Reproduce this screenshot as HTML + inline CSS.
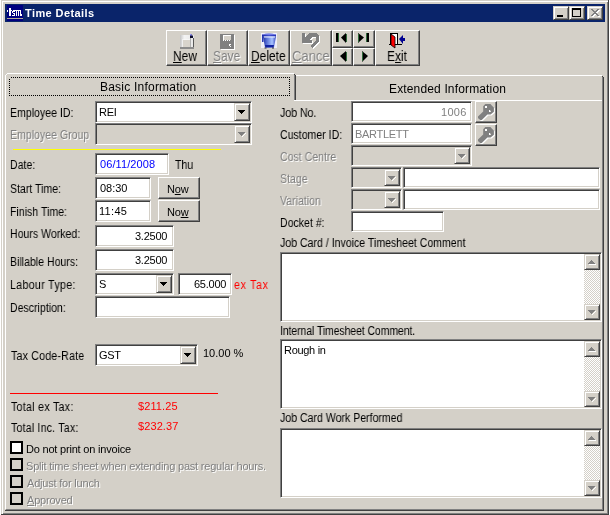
<!DOCTYPE html><html><head><meta charset="utf-8"><style>
html,body{margin:0;padding:0;width:610px;height:515px;overflow:hidden;background:#fff;position:relative}
body>*{position:absolute}
div.r{box-sizing:border-box;border-top:1px solid #fff;border-left:1px solid #fff;border-right:1px solid #404040;border-bottom:1px solid #404040;box-shadow:inset -1px -1px #808080}
div.rb{box-sizing:border-box;border-top:1px solid #d4d0c8;border-left:1px solid #d4d0c8;border-right:1px solid #404040;border-bottom:1px solid #404040;box-shadow:inset 1px 1px #fff, inset -1px -1px #808080}
div.s{box-sizing:border-box;border-top:1px solid #808080;border-left:1px solid #808080;border-right:1px solid #fff;border-bottom:1px solid #fff;box-shadow:inset 1px 1px #404040, inset -1px -1px #d4d0c8}
div.t{font-family:"Liberation Sans",sans-serif;white-space:nowrap;will-change:transform}
div.chk{background:repeating-conic-gradient(#fff 0 25%,#d4d0c8 0 50%) 0 0/2px 2px}
u{text-decoration:underline;text-decoration-thickness:1px;text-underline-offset:1px}
</style></head><body>
<div style="left:1px;top:0;width:608px;height:515px;background:#d4d0c8;border-right:1px solid #404040;border-bottom:1px solid #404040;box-sizing:border-box;box-shadow:inset 1px 1px #d4d0c8, inset 2px 2px #fff, inset -1px -1px #808080"></div>
<div style="left:5px;top:4px;width:600px;height:18px;background:#0a246a"></div>
<div style="left:7px;top:5px;width:16px;height:16px;background:#000080"></div>
<svg style="left:0;top:0" width="30" height="22" shape-rendering="crispEdges"><rect x="7" y="10" width="1" height="2" fill="#fff"/><rect x="9" y="8" width="2" height="8" fill="#fff"/><rect x="11" y="10" width="1" height="1" fill="#fff"/><rect x="12" y="11" width="3" height="1" fill="#fff"/><rect x="12" y="12" width="1" height="1" fill="#fff"/><rect x="13" y="13" width="2" height="1" fill="#fff"/><rect x="14" y="14" width="1" height="1" fill="#fff"/><rect x="12" y="15" width="3" height="1" fill="#fff"/><rect x="13" y="10" width="2" height="1" fill="#fff"/><rect x="16" y="10" width="1" height="6" fill="#fff"/><rect x="17" y="10" width="2" height="1" fill="#fff"/><rect x="18" y="11" width="1" height="5" fill="#fff"/><rect x="19" y="10" width="2" height="1" fill="#fff"/><rect x="20" y="11" width="1" height="5" fill="#fff"/><rect x="15" y="10" width="1" height="1" fill="#fff"/><rect x="21" y="14" width="1" height="2" fill="#fff"/></svg>
<div style="left:7px;top:18px;width:16px;height:1px;background:#b0a898"></div>
<div class="t" style="left:25px;top:8px;font-size:11px;line-height:11px;letter-spacing:0.4px;font-weight:bold;color:#fff">Time Details</div>
<div class="rb" style="left:553px;top:6px;width:16px;height:14px;background:#d4d0c8"></div>
<div class="rb" style="left:569px;top:6px;width:16px;height:14px;background:#d4d0c8"></div>
<div class="rb" style="left:587px;top:6px;width:16px;height:14px;background:#d4d0c8"></div>
<div style="left:557px;top:15px;width:6px;height:2px;background:#000"></div>
<div style="left:572px;top:8px;width:9px;height:9px;box-sizing:border-box;border:1px solid #000;border-top-width:2px"></div>
<svg style="left:591px;top:9px" width="10" height="9" shape-rendering="crispEdges"><path d="M1 1h2v1h1v1h2v-1h1v-1h2v1h-1v1h-1v1h-1v1h1v1h1v1h1v1h-2v-1h-1v-1h-2v1h-1v1h-2v-1h1v-1h1v-1h1v-1h-1v-1h-1v-1h-1z" fill="#fff"/><path d="M0 0h2v1h1v1h2v-1h1v-1h2v1h-1v1h-1v1h-1v1h1v1h1v1h1v1h-2v-1h-1v-1h-2v1h-1v1h-2v-1h1v-1h1v-1h1v-1h-1v-1h-1v-1h-1z" fill="#808080"/></svg>
<div class="r" style="left:166px;top:30px;width:41px;height:36px;background:#d4d0c8"></div>
<div class="r" style="left:207px;top:30px;width:41px;height:36px;background:#d4d0c8"></div>
<div class="r" style="left:248px;top:30px;width:42px;height:36px;background:#d4d0c8"></div>
<div class="r" style="left:290px;top:30px;width:42px;height:36px;background:#d4d0c8"></div>
<div class="r" style="left:332px;top:30px;width:21px;height:18px;background:#d4d0c8"></div>
<div class="r" style="left:353px;top:30px;width:22px;height:18px;background:#d4d0c8"></div>
<div class="r" style="left:332px;top:48px;width:21px;height:18px;background:#d4d0c8"></div>
<div class="r" style="left:353px;top:48px;width:22px;height:18px;background:#d4d0c8"></div>
<div class="r" style="left:375px;top:30px;width:45px;height:36px;background:#d4d0c8"></div>
<div class="t" style="left:173px;top:48px;font-size:15px;line-height:15px;transform:scaleX(0.8);transform-origin:0 0;color:#000"><u>N</u>ew</div>
<div class="t" style="left:214px;top:49px;font-size:15px;line-height:15px;transform:scaleX(0.8);transform-origin:0 0;color:#fff"><u>S</u>ave</div>
<div class="t" style="left:213px;top:48px;font-size:15px;line-height:15px;transform:scaleX(0.8);transform-origin:0 0;color:#808080"><u>S</u>ave</div>
<div class="t" style="left:251px;top:48px;font-size:15px;line-height:15px;transform:scaleX(0.8);transform-origin:0 0;color:#000"><u>D</u>elete</div>
<div style="left:292px;top:32px;width:38px;height:32px;overflow:hidden"><div class="t" style="position:absolute;left:1px;top:17px;font-size:15px;line-height:15px;transform:scaleX(0.87);transform-origin:0 0;color:#fff"><u>C</u>ancel</div><div class="t" style="position:absolute;left:0px;top:16px;font-size:15px;line-height:15px;transform:scaleX(0.87);transform-origin:0 0;color:#808080"><u>C</u>ancel</div></div>
<div class="t" style="left:387px;top:48px;font-size:15px;line-height:15px;transform:scaleX(0.8);transform-origin:0 0;color:#000">E<u>x</u>it</div>
<svg style="left:176px;top:32px" width="20" height="18"><defs><linearGradient id="ng" x1="0" x2="1"><stop offset="0" stop-color="#c4c4c4"/><stop offset="0.3" stop-color="#f4f4f4"/><stop offset="1" stop-color="#e8e8e8"/></linearGradient></defs><rect x="4" y="3" width="14" height="14" fill="url(#ng)"/><rect x="6.5" y="7.5" width="8" height="8" fill="none" stroke="#fff" stroke-width="1" stroke-dasharray="1 1"/><rect x="7" y="8" width="7" height="7" fill="#d8d4cc"/><rect x="17" y="6" width="1" height="11" fill="#585858"/><rect x="14" y="6" width="1" height="11" fill="#b0b0b0"/><rect x="4" y="15" width="14" height="2" fill="#8c8c8c"/><path d="M14 2h1l2 2v2h-3z" fill="#101030"/><path d="M14 2h1l1.5 1.5-2.5 0z" fill="#9090ff"/></svg>
<svg style="left:220px;top:34px" width="16" height="16" shape-rendering="crispEdges"><rect x="1" y="1" width="14" height="15" fill="#fff"/><rect x="0" y="0" width="14" height="15" fill="#808080"/><rect x="3" y="1" width="8" height="1" fill="#fff"/><rect x="3" y="1" width="1" height="5" fill="#fff"/><rect x="4" y="2" width="7" height="4" fill="#d4d0c8"/><path d="M3 6h1v1h-1zM5 6h1v1h-1zM7 6h1v1h-1zM9 6h1v1h-1z" fill="#fff"/><path d="M9 10h2v1h-1v1h1v1h-1v-1h-1z" fill="#fff"/></svg>
<svg style="left:261px;top:33px" width="16" height="16"><defs><linearGradient id="bg1" x1="0" x2="1"><stop offset="0" stop-color="#2030a0"/><stop offset="0.25" stop-color="#5068d0"/><stop offset="0.7" stop-color="#a8c4ff"/><stop offset="1" stop-color="#3848c0"/></linearGradient><linearGradient id="bg2" x1="0" x2="1"><stop offset="0" stop-color="#1828a0"/><stop offset="0.5" stop-color="#4050d0"/><stop offset="1" stop-color="#2030b0"/></linearGradient></defs><rect x="0" y="0" width="16" height="15" fill="#eeeef8"/><path d="M2 3.5h13l-2 11h-9z" fill="url(#bg1)"/><path d="M1 1.5Q8 -0.5 15 1.5V3.5H1z" fill="url(#bg2)"/><rect x="1.5" y="1" width="13" height="0.8" fill="#a0a0ff" opacity="0.7"/><rect x="3" y="3.5" width="11" height="1" fill="#f0f4ff"/><path d="M4 12h9l-0.5 2.5h-8z" fill="#1020a0"/><rect x="1" y="3" width="1.5" height="6" fill="#2838b0"/><path d="M3.5 14.5h2v1h-2zM11 14.5h2v1h-2z" fill="#303040"/></svg>
<svg style="left:302px;top:33px" width="20" height="18" shape-rendering="crispEdges"><path transform="translate(1,1)" d="M0 0h3v4l4-4h7l3 3v5l-7 7-2-2 6-6v-2l-1-1h-3l-3 3h3v3h-10z" fill="#fff"/><path d="M0 0h3v4l4-4h7l3 3v5l-7 7-2-2 6-6v-2l-1-1h-3l-3 3h3v3h-10z" fill="#808080"/></svg>
<svg style="left:388px;top:33px" width="20" height="17"><rect x="2" y="0" width="8" height="12" fill="#000"/><rect x="3" y="1" width="6" height="10" fill="#fff"/><rect x="1" y="11" width="13" height="1" fill="#000"/><path d="M3 1l4 3v11l-4-3z" fill="#ff0000" stroke="#000" stroke-width="0.8"/><path d="M11 6l4-4v3h2v3h-2v3z" fill="#000090"/></svg>
<svg style="left:336px;top:33px" width="11" height="10" shape-rendering="crispEdges"><rect x="0" y="0" width="2" height="9" fill="#000"/><rect x="2" y="0" width="1" height="9" fill="#2f6a3a"/><path d="M5 4.5l5-4.5v10z" fill="#000" shape-rendering="auto"/><rect x="10" y="1" width="1" height="8" fill="#2f6a3a"/></svg>
<svg style="left:358px;top:33px" width="11" height="10" shape-rendering="crispEdges"><path d="M0 0l6 4.5-6 5.5z" fill="#000" shape-rendering="auto"/><rect x="0" y="1" width="1" height="8" fill="#2f6a3a"/><rect x="9" y="0" width="2" height="9" fill="#000"/><rect x="8" y="0" width="1" height="9" fill="#2f6a3a"/></svg>
<svg style="left:340px;top:51px" width="7" height="11" shape-rendering="crispEdges"><path d="M0 5l6-5v11z" fill="#000" shape-rendering="auto"/><rect x="6" y="1" width="1" height="9" fill="#2f6a3a"/></svg>
<svg style="left:362px;top:51px" width="7" height="11" shape-rendering="crispEdges"><path d="M6 5l-6-5v11z" fill="#000" shape-rendering="auto"/><rect x="0" y="1" width="1" height="9" fill="#2f6a3a"/></svg>
<svg style="left:0;top:0" width="610" height="515" shape-rendering="crispEdges"><rect x="296" y="75" width="306" height="1" fill="#fff"/><rect x="602" y="76" width="1" height="1" fill="#404040"/><rect x="296" y="100" width="306" height="1" fill="#fff"/><rect x="5" y="75" width="1" height="434" fill="#fff"/><rect x="602" y="77" width="1" height="433" fill="#808080"/><rect x="603" y="77" width="1" height="434" fill="#404040"/><rect x="6" y="509" width="597" height="1" fill="#808080"/><rect x="5" y="510" width="599" height="1" fill="#404040"/><rect x="6" y="74" width="1" height="1" fill="#fff"/><rect x="7" y="73" width="287" height="1" fill="#fff"/><rect x="294" y="74" width="1" height="1" fill="#404040"/><rect x="294" y="75" width="1" height="25" fill="#808080"/><rect x="295" y="75" width="1" height="25" fill="#404040"/><rect x="294" y="100" width="2" height="1" fill="#fff"/><path d="M10 77h1M10 95h1M12 77h1M12 95h1M14 77h1M14 95h1M16 77h1M16 95h1M18 77h1M18 95h1M20 77h1M20 95h1M22 77h1M22 95h1M24 77h1M24 95h1M26 77h1M26 95h1M28 77h1M28 95h1M30 77h1M30 95h1M32 77h1M32 95h1M34 77h1M34 95h1M36 77h1M36 95h1M38 77h1M38 95h1M40 77h1M40 95h1M42 77h1M42 95h1M44 77h1M44 95h1M46 77h1M46 95h1M48 77h1M48 95h1M50 77h1M50 95h1M52 77h1M52 95h1M54 77h1M54 95h1M56 77h1M56 95h1M58 77h1M58 95h1M60 77h1M60 95h1M62 77h1M62 95h1M64 77h1M64 95h1M66 77h1M66 95h1M68 77h1M68 95h1M70 77h1M70 95h1M72 77h1M72 95h1M74 77h1M74 95h1M76 77h1M76 95h1M78 77h1M78 95h1M80 77h1M80 95h1M82 77h1M82 95h1M84 77h1M84 95h1M86 77h1M86 95h1M88 77h1M88 95h1M90 77h1M90 95h1M92 77h1M92 95h1M94 77h1M94 95h1M96 77h1M96 95h1M98 77h1M98 95h1M100 77h1M100 95h1M102 77h1M102 95h1M104 77h1M104 95h1M106 77h1M106 95h1M108 77h1M108 95h1M110 77h1M110 95h1M112 77h1M112 95h1M114 77h1M114 95h1M116 77h1M116 95h1M118 77h1M118 95h1M120 77h1M120 95h1M122 77h1M122 95h1M124 77h1M124 95h1M126 77h1M126 95h1M128 77h1M128 95h1M130 77h1M130 95h1M132 77h1M132 95h1M134 77h1M134 95h1M136 77h1M136 95h1M138 77h1M138 95h1M140 77h1M140 95h1M142 77h1M142 95h1M144 77h1M144 95h1M146 77h1M146 95h1M148 77h1M148 95h1M150 77h1M150 95h1M152 77h1M152 95h1M154 77h1M154 95h1M156 77h1M156 95h1M158 77h1M158 95h1M160 77h1M160 95h1M162 77h1M162 95h1M164 77h1M164 95h1M166 77h1M166 95h1M168 77h1M168 95h1M170 77h1M170 95h1M172 77h1M172 95h1M174 77h1M174 95h1M176 77h1M176 95h1M178 77h1M178 95h1M180 77h1M180 95h1M182 77h1M182 95h1M184 77h1M184 95h1M186 77h1M186 95h1M188 77h1M188 95h1M190 77h1M190 95h1M192 77h1M192 95h1M194 77h1M194 95h1M196 77h1M196 95h1M198 77h1M198 95h1M200 77h1M200 95h1M202 77h1M202 95h1M204 77h1M204 95h1M206 77h1M206 95h1M208 77h1M208 95h1M210 77h1M210 95h1M212 77h1M212 95h1M214 77h1M214 95h1M216 77h1M216 95h1M218 77h1M218 95h1M220 77h1M220 95h1M222 77h1M222 95h1M224 77h1M224 95h1M226 77h1M226 95h1M228 77h1M228 95h1M230 77h1M230 95h1M232 77h1M232 95h1M234 77h1M234 95h1M236 77h1M236 95h1M238 77h1M238 95h1M240 77h1M240 95h1M242 77h1M242 95h1M244 77h1M244 95h1M246 77h1M246 95h1M248 77h1M248 95h1M250 77h1M250 95h1M252 77h1M252 95h1M254 77h1M254 95h1M256 77h1M256 95h1M258 77h1M258 95h1M260 77h1M260 95h1M262 77h1M262 95h1M264 77h1M264 95h1M266 77h1M266 95h1M268 77h1M268 95h1M270 77h1M270 95h1M272 77h1M272 95h1M274 77h1M274 95h1M276 77h1M276 95h1M278 77h1M278 95h1M280 77h1M280 95h1M282 77h1M282 95h1M284 77h1M284 95h1M286 77h1M286 95h1M288 77h1M288 95h1M9 78v1M289 78v1M9 80v1M289 80v1M9 82v1M289 82v1M9 84v1M289 84v1M9 86v1M289 86v1M9 88v1M289 88v1M9 90v1M289 90v1M9 92v1M289 92v1M9 94v1M289 94v1" stroke="#000" stroke-width="1" transform="translate(0.5,0.5)" fill="none"/></svg>
<div class="t" style="left:100px;top:81px;font-size:12px;line-height:12px;letter-spacing:0.22px;color:#000">Basic Information</div>
<div class="t" style="left:389px;top:83px;font-size:12px;line-height:12px;letter-spacing:0.15px;color:#000">Extended Information</div>
<div class="t" style="left:10px;top:107px;font-size:12px;line-height:12px;transform:scaleX(0.88);transform-origin:0 0;color:#000">Employee ID:</div>
<div class="s" style="left:95px;top:101px;width:157px;height:22px;background:#fff"></div>
<div class="rb" style="left:234px;top:103px;width:16px;height:18px;background:#d4d0c8"></div>
<svg style="left:238px;top:110px" width="7" height="4" shape-rendering="crispEdges"><path d="M0 0h7v1h-1v1h-1v1h-1v1h-1v-1h-1v-1h-1v-1h-1z" fill="#000"/></svg>
<div class="t" style="left:99px;top:107px;font-size:11px;line-height:11px;letter-spacing:-0.3px;color:#000">REI</div>
<div class="t" style="left:11px;top:130px;font-size:12px;line-height:12px;transform:scaleX(0.88);transform-origin:0 0;color:#fff">Employee Group</div>
<div class="t" style="left:10px;top:129px;font-size:12px;line-height:12px;transform:scaleX(0.88);transform-origin:0 0;color:#808080">Employee Group</div>
<div class="s" style="left:95px;top:123px;width:157px;height:22px;background:#d4d0c8"></div>
<div class="rb" style="left:234px;top:125px;width:16px;height:18px;background:#d4d0c8"></div>
<svg style="left:238px;top:132px" width="8" height="5" shape-rendering="crispEdges"><path d="M4 4h1v-1h1v-1h1v-1h1v1h-1v1h-1v1h-1v1h-1z" fill="#fff"/><path d="M0 0h7v1h-1v1h-1v1h-1v1h-1v-1h-1v-1h-1v-1h-1z" fill="#808080"/></svg>
<div style="left:13px;top:149px;width:208px;height:1px;background:#ffff00"></div>
<div class="t" style="left:10px;top:159px;font-size:12px;line-height:12px;transform:scaleX(0.88);transform-origin:0 0;color:#000">Date:</div>
<div class="s" style="left:95px;top:153px;width:74px;height:22px;background:#fff"></div>
<div class="t" style="left:100px;top:159px;font-size:11px;line-height:11px;letter-spacing:0.1px;color:#0000ff">06/11/2008</div>
<div class="t" style="left:175px;top:159px;font-size:12px;line-height:12px;transform:scaleX(0.88);transform-origin:0 0;color:#000">Thu</div>
<div class="t" style="left:10px;top:183px;font-size:12px;line-height:12px;transform:scaleX(0.88);transform-origin:0 0;color:#000">Start Time:</div>
<div class="s" style="left:95px;top:177px;width:56px;height:22px;background:#fff"></div>
<div class="t" style="left:100px;top:183px;font-size:11px;line-height:11px;letter-spacing:-0.05px;color:#000">08:30</div>
<div class="r" style="left:158px;top:177px;width:42px;height:22px;background:#d4d0c8"></div>
<div class="t" style="left:167px;top:184px;font-size:11px;line-height:11px;letter-spacing:-0.2px;color:#000">N<u>o</u>w</div>
<div class="t" style="left:10px;top:206px;font-size:12px;line-height:12px;transform:scaleX(0.88);transform-origin:0 0;color:#000">Finish Time:</div>
<div class="s" style="left:95px;top:200px;width:56px;height:22px;background:#fff"></div>
<div class="t" style="left:99px;top:206px;font-size:11px;line-height:11px;letter-spacing:0.3px;color:#000">11:45</div>
<div class="r" style="left:158px;top:200px;width:42px;height:22px;background:#d4d0c8"></div>
<div class="t" style="left:167px;top:207px;font-size:11px;line-height:11px;letter-spacing:-0.2px;color:#000">No<u>w</u></div>
<div class="t" style="left:10px;top:228px;font-size:12px;line-height:12px;transform:scaleX(0.88);transform-origin:0 0;color:#000">Hours Worked:</div>
<div class="s" style="left:95px;top:225px;width:79px;height:22px;background:#fff"></div>
<div class="t" style="right:443px;top:231px;font-size:11px;line-height:11px;letter-spacing:-0.25px;color:#000">3.2500</div>
<div class="t" style="left:10px;top:256px;font-size:12px;line-height:12px;transform:scaleX(0.88);transform-origin:0 0;color:#000">Billable Hours:</div>
<div class="s" style="left:95px;top:249px;width:79px;height:22px;background:#fff"></div>
<div class="t" style="right:443px;top:255px;font-size:11px;line-height:11px;letter-spacing:-0.25px;color:#000">3.2500</div>
<div class="t" style="left:10px;top:279px;font-size:12px;line-height:12px;letter-spacing:0.41px;transform:scaleX(0.88);transform-origin:0 0;color:#000">Labour Type:</div>
<div class="s" style="left:95px;top:273px;width:79px;height:22px;background:#fff"></div>
<div class="rb" style="left:156px;top:275px;width:16px;height:18px;background:#d4d0c8"></div>
<svg style="left:160px;top:282px" width="7" height="4" shape-rendering="crispEdges"><path d="M0 0h7v1h-1v1h-1v1h-1v1h-1v-1h-1v-1h-1v-1h-1z" fill="#000"/></svg>
<div class="t" style="left:99px;top:279px;font-size:11px;line-height:11px;letter-spacing:-0.3px;color:#000">S</div>
<div class="s" style="left:178px;top:273px;width:54px;height:22px;background:#fff"></div>
<div class="t" style="right:384px;top:279px;font-size:11px;line-height:11px;letter-spacing:-0.25px;color:#000">65.000</div>
<div class="t" style="left:234px;top:279px;font-size:12px;line-height:12px;letter-spacing:0.8px;transform:scaleX(0.88);transform-origin:0 0;color:#ff0000">ex Tax</div>
<div class="t" style="left:10px;top:302px;font-size:12px;line-height:12px;transform:scaleX(0.88);transform-origin:0 0;color:#000">Description:</div>
<div class="s" style="left:95px;top:296px;width:135px;height:22px;background:#fff"></div>
<div class="t" style="left:11px;top:350px;font-size:12px;line-height:12px;letter-spacing:0.26px;transform:scaleX(0.88);transform-origin:0 0;color:#000">Tax Code-Rate</div>
<div class="s" style="left:95px;top:344px;width:103px;height:22px;background:#fff"></div>
<div class="rb" style="left:180px;top:346px;width:16px;height:18px;background:#d4d0c8"></div>
<svg style="left:184px;top:353px" width="7" height="4" shape-rendering="crispEdges"><path d="M0 0h7v1h-1v1h-1v1h-1v1h-1v-1h-1v-1h-1v-1h-1z" fill="#000"/></svg>
<div class="t" style="left:99px;top:350px;font-size:11px;line-height:11px;letter-spacing:-0.3px;color:#000">GST</div>
<div class="t" style="left:203px;top:348px;font-size:11px;line-height:11px;color:#000">10.00 %</div>
<div style="left:10px;top:393px;width:208px;height:1px;background:#ff0000"></div>
<div class="t" style="left:11px;top:401px;font-size:12px;line-height:12px;letter-spacing:0.36px;transform:scaleX(0.88);transform-origin:0 0;color:#000">Total ex Tax:</div>
<div class="t" style="left:138px;top:401px;font-size:11px;line-height:11px;letter-spacing:0.1px;color:#ff0000">$211.25</div>
<div class="t" style="left:11px;top:422px;font-size:12px;line-height:12px;letter-spacing:0.24px;transform:scaleX(0.88);transform-origin:0 0;color:#000">Total Inc. Tax:</div>
<div class="t" style="left:138px;top:421px;font-size:11px;line-height:11px;letter-spacing:0.1px;color:#ff0000">$232.37</div>
<div style="left:10px;top:441px;width:13px;height:13px;box-sizing:border-box;border:2px solid #000;background:#fff"></div>
<div class="t" style="left:26px;top:444px;font-size:11px;line-height:11px;letter-spacing:-0.2px;color:#000">Do not print on invoice</div>
<div style="left:10px;top:458px;width:13px;height:13px;box-sizing:border-box;border:2px solid #000;background:#d4d0c8"></div>
<div class="t" style="left:27px;top:462px;font-size:11px;line-height:11px;letter-spacing:-0.2px;color:#fff">Split time sheet when extending past regular hours.</div>
<div class="t" style="left:26px;top:461px;font-size:11px;line-height:11px;letter-spacing:-0.2px;color:#808080">Split time sheet when extending past regular hours.</div>
<div style="left:10px;top:475px;width:13px;height:13px;box-sizing:border-box;border:2px solid #000;background:#d4d0c8"></div>
<div class="t" style="left:28px;top:479px;font-size:11px;line-height:11px;letter-spacing:-0.2px;color:#fff">Adjust for lunch</div>
<div class="t" style="left:27px;top:478px;font-size:11px;line-height:11px;letter-spacing:-0.2px;color:#808080">Adjust for lunch</div>
<div style="left:10px;top:492px;width:13px;height:13px;box-sizing:border-box;border:2px solid #000;background:#d4d0c8"></div>
<div class="t" style="left:28px;top:496px;font-size:11px;line-height:11px;letter-spacing:-0.2px;color:#fff"><u>A</u>pproved</div>
<div class="t" style="left:27px;top:495px;font-size:11px;line-height:11px;letter-spacing:-0.2px;color:#808080"><u>A</u>pproved</div>
<div class="t" style="left:280px;top:107px;font-size:12px;line-height:12px;transform:scaleX(0.88);transform-origin:0 0;color:#000">Job No.</div>
<div class="s" style="left:351px;top:101px;width:121px;height:21px;background:#fff"></div>
<div class="t" style="right:143px;top:107px;font-size:11px;line-height:11px;letter-spacing:0.3px;color:#808080">1006</div>
<div class="r" style="left:475px;top:101px;width:22px;height:22px;background:#d4d0c8"></div>
<div class="t" style="left:280px;top:129px;font-size:12px;line-height:12px;transform:scaleX(0.88);transform-origin:0 0;color:#000">Customer ID:</div>
<div class="s" style="left:351px;top:123px;width:121px;height:21px;background:#fff"></div>
<div class="t" style="left:355px;top:129px;font-size:11px;line-height:11px;letter-spacing:-0.3px;color:#808080">BARTLETT</div>
<div class="r" style="left:475px;top:124px;width:22px;height:22px;background:#d4d0c8"></div>
<div class="t" style="left:281px;top:152px;font-size:12px;line-height:12px;transform:scaleX(0.88);transform-origin:0 0;color:#fff">Cost Centre</div>
<div class="t" style="left:280px;top:151px;font-size:12px;line-height:12px;transform:scaleX(0.88);transform-origin:0 0;color:#808080">Cost Centre</div>
<div class="s" style="left:351px;top:145px;width:121px;height:21px;background:#d4d0c8"></div>
<div class="rb" style="left:454px;top:147px;width:16px;height:17px;background:#d4d0c8"></div>
<svg style="left:458px;top:154px" width="8" height="5" shape-rendering="crispEdges"><path d="M4 4h1v-1h1v-1h1v-1h1v1h-1v1h-1v1h-1v1h-1z" fill="#fff"/><path d="M0 0h7v1h-1v1h-1v1h-1v1h-1v-1h-1v-1h-1v-1h-1z" fill="#808080"/></svg>
<div class="t" style="left:281px;top:174px;font-size:12px;line-height:12px;transform:scaleX(0.88);transform-origin:0 0;color:#fff">Stage</div>
<div class="t" style="left:280px;top:173px;font-size:12px;line-height:12px;transform:scaleX(0.88);transform-origin:0 0;color:#808080">Stage</div>
<div class="s" style="left:351px;top:167px;width:51px;height:21px;background:#d4d0c8"></div>
<div class="rb" style="left:384px;top:169px;width:16px;height:17px;background:#d4d0c8"></div>
<svg style="left:388px;top:176px" width="8" height="5" shape-rendering="crispEdges"><path d="M4 4h1v-1h1v-1h1v-1h1v1h-1v1h-1v1h-1v1h-1z" fill="#fff"/><path d="M0 0h7v1h-1v1h-1v1h-1v1h-1v-1h-1v-1h-1v-1h-1z" fill="#808080"/></svg>
<div class="s" style="left:403px;top:167px;width:197px;height:21px;background:#fff"></div>
<div class="t" style="left:281px;top:196px;font-size:12px;line-height:12px;transform:scaleX(0.88);transform-origin:0 0;color:#fff">Variation</div>
<div class="t" style="left:280px;top:195px;font-size:12px;line-height:12px;transform:scaleX(0.88);transform-origin:0 0;color:#808080">Variation</div>
<div class="s" style="left:351px;top:189px;width:51px;height:21px;background:#d4d0c8"></div>
<div class="rb" style="left:384px;top:191px;width:16px;height:17px;background:#d4d0c8"></div>
<svg style="left:388px;top:198px" width="8" height="5" shape-rendering="crispEdges"><path d="M4 4h1v-1h1v-1h1v-1h1v1h-1v1h-1v1h-1v1h-1z" fill="#fff"/><path d="M0 0h7v1h-1v1h-1v1h-1v1h-1v-1h-1v-1h-1v-1h-1z" fill="#808080"/></svg>
<div class="s" style="left:403px;top:189px;width:197px;height:21px;background:#fff"></div>
<div class="t" style="left:280px;top:217px;font-size:12px;line-height:12px;transform:scaleX(0.88);transform-origin:0 0;color:#000">Docket #:</div>
<div class="s" style="left:351px;top:211px;width:93px;height:21px;background:#fff"></div>
<svg style="left:476px;top:102px" width="20" height="20"><path d="M9.3 2.1H14.4L17.9 5.6V9.7L14.6 12.6H11.4L5.8 17.9H4L2 15.9V14.6L7.2 9.6V4.2Z" fill="#fff" transform="translate(1,1)"/><path d="M9.3 2.1H14.4L17.9 5.6V9.7L14.6 12.6H11.4L5.8 17.9H4L2 15.9V14.6L7.2 9.6V4.2Z" fill="#808080"/><rect x="9" y="4" width="2" height="2" fill="#fff"/><path d="M13 8h1l1 2h-2z" fill="#fff"/></svg>
<svg style="left:476px;top:125px" width="20" height="20"><path d="M9.3 2.1H14.4L17.9 5.6V9.7L14.6 12.6H11.4L5.8 17.9H4L2 15.9V14.6L7.2 9.6V4.2Z" fill="#fff" transform="translate(1,1)"/><path d="M9.3 2.1H14.4L17.9 5.6V9.7L14.6 12.6H11.4L5.8 17.9H4L2 15.9V14.6L7.2 9.6V4.2Z" fill="#808080"/><rect x="9" y="4" width="2" height="2" fill="#fff"/><path d="M13 8h1l1 2h-2z" fill="#fff"/></svg>
<div class="t" style="left:280px;top:237px;font-size:12px;line-height:12px;transform:scaleX(0.88);transform-origin:0 0;color:#000">Job Card / Invoice Timesheet Comment</div>
<div class="s" style="left:280px;top:252px;width:322px;height:70px;background:#fff"></div>
<div class="chk" style="left:584px;top:254px;width:16px;height:66px"></div>
<div class="rb" style="left:584px;top:254px;width:16px;height:16px;background:#d4d0c8"></div>
<svg style="left:588px;top:260px" width="8" height="5" shape-rendering="crispEdges"><path d="M1 4h7v1h-7z" fill="#fff"/><path d="M3 0h1v1h1v1h1v1h1v1h-7v-1h1v-1h1v-1h1z" fill="#808080"/></svg>
<div class="rb" style="left:584px;top:304px;width:16px;height:16px;background:#d4d0c8"></div>
<svg style="left:588px;top:310px" width="8" height="5" shape-rendering="crispEdges"><path d="M4 4h1v-1h1v-1h1v-1h1v1h-1v1h-1v1h-1v1h-1z" fill="#fff"/><path d="M0 0h7v1h-1v1h-1v1h-1v1h-1v-1h-1v-1h-1v-1h-1z" fill="#808080"/></svg>
<div class="t" style="left:280px;top:325px;font-size:12px;line-height:12px;letter-spacing:-0.08px;transform:scaleX(0.87);transform-origin:0 0;color:#000">Internal Timesheet Comment.</div>
<div class="s" style="left:280px;top:339px;width:322px;height:70px;background:#fff"></div>
<div class="chk" style="left:584px;top:341px;width:16px;height:66px"></div>
<div class="rb" style="left:584px;top:341px;width:16px;height:16px;background:#d4d0c8"></div>
<svg style="left:588px;top:347px" width="8" height="5" shape-rendering="crispEdges"><path d="M1 4h7v1h-7z" fill="#fff"/><path d="M3 0h1v1h1v1h1v1h1v1h-7v-1h1v-1h1v-1h1z" fill="#808080"/></svg>
<div class="rb" style="left:584px;top:391px;width:16px;height:16px;background:#d4d0c8"></div>
<svg style="left:588px;top:397px" width="8" height="5" shape-rendering="crispEdges"><path d="M4 4h1v-1h1v-1h1v-1h1v1h-1v1h-1v1h-1v1h-1z" fill="#fff"/><path d="M0 0h7v1h-1v1h-1v1h-1v1h-1v-1h-1v-1h-1v-1h-1z" fill="#808080"/></svg>
<div class="t" style="left:284px;top:345px;font-size:11px;line-height:11px;letter-spacing:-0.3px;color:#000">Rough in</div>
<div class="t" style="left:280px;top:412px;font-size:12px;line-height:12px;transform:scaleX(0.88);transform-origin:0 0;color:#000">Job Card Work Performed</div>
<div class="s" style="left:280px;top:428px;width:322px;height:70px;background:#fff"></div>
<div class="chk" style="left:584px;top:430px;width:16px;height:66px"></div>
<div class="rb" style="left:584px;top:430px;width:16px;height:16px;background:#d4d0c8"></div>
<svg style="left:588px;top:436px" width="8" height="5" shape-rendering="crispEdges"><path d="M1 4h7v1h-7z" fill="#fff"/><path d="M3 0h1v1h1v1h1v1h1v1h-7v-1h1v-1h1v-1h1z" fill="#808080"/></svg>
<div class="rb" style="left:584px;top:480px;width:16px;height:16px;background:#d4d0c8"></div>
<svg style="left:588px;top:486px" width="8" height="5" shape-rendering="crispEdges"><path d="M4 4h1v-1h1v-1h1v-1h1v1h-1v1h-1v1h-1v1h-1z" fill="#fff"/><path d="M0 0h7v1h-1v1h-1v1h-1v1h-1v-1h-1v-1h-1v-1h-1z" fill="#808080"/></svg>
</body></html>
